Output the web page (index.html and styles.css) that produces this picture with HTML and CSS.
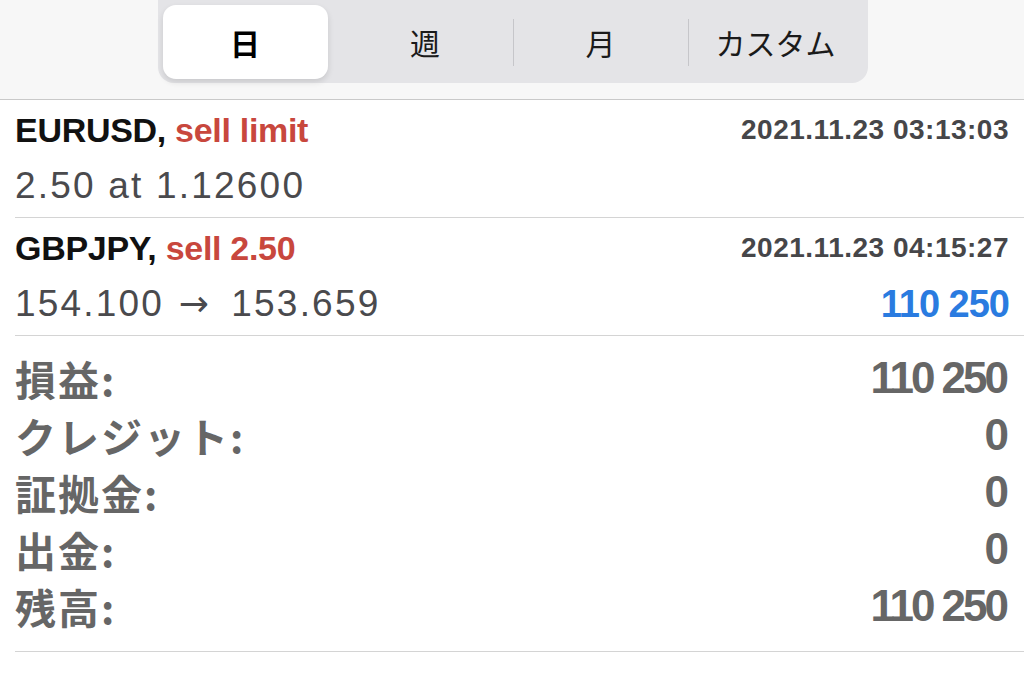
FILE: index.html
```html
<!DOCTYPE html>
<html lang="ja">

<head>
    <meta charset="UTF-8" />
    <meta name="viewport" content="width=device-width, initial-scale=1.0" />
    <title>履歴</title>
    <link rel="stylesheet" href="styles.css">
</head>

<body>

    <!-- Selector de periodo -->
    <div class="topbar">
        <div class="segmented">
            <div class="seg"><span class="pill">日</span></div>
            <div class="seg">週</div>
            <div class="seg with-line">月</div>
            <div class="seg with-line">カスタム</div>
        </div>
    </div>

    <!-- Lista de operaciones -->
    <ul class="deals">
        <li class="deal">
            <div class="line top">
                <span class="symbol">EURUSD, <span class="sell">sell limit</span></span>
                <span class="time">2021.11.23 03:13:03</span>
            </div>
            <div class="line bottom">
                <span class="price">2.50 at 1.12600</span>
            </div>
        </li>
        <li class="deal">
            <div class="line top">
                <span class="symbol">GBPJPY, <span class="sell">sell 2.50</span></span>
                <span class="time">2021.11.23 04:15:27</span>
            </div>
            <div class="line bottom">
                <span class="price">154.100 <span class="arrow">&rarr;</span> 153.659</span>
                <span class="profit">110 250</span>
            </div>
        </li>
    </ul>

    <!-- Resumen -->
    <div class="summary">
        <div class="sum-row"><span class="label">損益:</span><span class="value">110 250</span></div>
        <div class="sum-row"><span class="label">クレジット:</span><span class="value">0</span></div>
        <div class="sum-row"><span class="label">証拠金:</span><span class="value">0</span></div>
        <div class="sum-row"><span class="label">出金:</span><span class="value">0</span></div>
        <div class="sum-row"><span class="label">残高:</span><span class="value">110 250</span></div>
    </div>

</body>

</html>
```

FILE: styles.css
```css
/* Página */
body {
    margin: 0;
    background: #fff;
    font-family: "Liberation Sans", "Noto Sans CJK JP", sans-serif;
    color: #111;
}

/* Barra superior con el control segmentado */
.topbar {
    height: 99px;
    background: #f7f7f7;
    border-bottom: 1px solid #c9c9c9;
    display: flex;
    justify-content: center;
}

.segmented {
    margin-left: 1px;
    width: 700px;
    height: 78px;
    padding: 5px 5px 0;
    background: #e4e4e7;
    border-radius: 0 0 16px 16px;
    display: grid;
    grid-template-columns: repeat(4, 1fr);
    align-items: center;
    font-family: "Noto Sans CJK JP", sans-serif;
    font-size: 30px;
    color: #1a1a1a;
}

.seg {
    height: 74px;
    display: flex;
    align-items: center;
    justify-content: center;
    margin-bottom: 4px;
}

.seg.with-line {
    border-left: 1px solid #c6c6ca;
    height: 47px;
}

.pill {
    width: 165px;
    height: 74px;
    margin-right: 10px;
    background: #fff;
    border-radius: 13px;
    box-shadow: 0 3px 6px rgba(0, 0, 0, 0.12);
    display: flex;
    align-items: center;
    justify-content: center;
    font-weight: 700;
    color: #000;
}

/* Operaciones */
.deals {
    list-style: none;
    margin: 0;
    padding: 0;
}

.deal {
    margin-left: 15px;
    padding: 7px 15px 9px 0;
    border-bottom: 1px solid #d4d4d4;
}

.line {
    display: flex;
    justify-content: space-between;
    align-items: center;
}

.line.top {
    height: 46px;
}

.line.bottom {
    height: 44px;
    margin-top: 11px;
}

.symbol {
    font-size: 34px;
    font-weight: 700;
    letter-spacing: -0.3px;
    color: #111;
}

.sell {
    color: #c8473d;
}

.time {
    font-size: 28px;
    font-weight: 700;
    letter-spacing: 0.5px;
    color: #464649;
}

.price {
    font-size: 37px;
    letter-spacing: 2.2px;
    color: #4a4a4d;
}

.arrow {
    font-family: "DejaVu Sans", sans-serif;
    font-size: 36px;
    letter-spacing: 0;
    margin: 0 10px 0 2px;
}

.profit {
    font-size: 38px;
    font-weight: 700;
    letter-spacing: -1px;
    color: #2a7be0;
}

/* Resumen */
.summary {
    margin-left: 15px;
    padding: 13px 15px 17px 0;
    border-bottom: 1px solid #d4d4d4;
}

.sum-row {
    height: 57px;
    display: flex;
    justify-content: space-between;
    align-items: center;
    color: #666;
    font-weight: 700;
}

.label {
    font-family: "Noto Sans CJK JP", sans-serif;
    font-size: 41px;
    letter-spacing: 2px;
}

.value {
    font-size: 44px;
    letter-spacing: -3px;
    margin-right: 3px;
}
```
